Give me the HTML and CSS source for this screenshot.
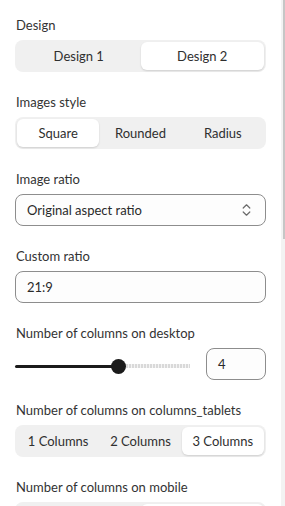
FILE: index.html
```html
<!DOCTYPE html>
<html lang="en">
<head>
    <meta charset="UTF-8">
    <meta name="viewport" content="width=device-width, initial-scale=1.0">
    <title>Gallery settings</title>
    <link rel="stylesheet" href="styles.css">
</head>
<body>

    <div class="panel">

        <!-- Design -->
        <div class="field">
            <label class="field-label">Design</label>
            <div class="segmented two">
                <button class="segment">Design 1</button>
                <button class="segment active">Design 2</button>
            </div>
        </div>

        <!-- Images style -->
        <div class="field">
            <label class="field-label">Images style</label>
            <div class="segmented three">
                <button class="segment active">Square</button>
                <button class="segment">Rounded</button>
                <button class="segment">Radius</button>
            </div>
        </div>

        <!-- Image ratio -->
        <div class="field">
            <label class="field-label">Image ratio</label>
            <div class="select">
                <span>Original aspect ratio</span>
                <svg class="select-icon" width="9" height="14" viewBox="0 0 9 14">
                    <path d="M1.2 5 L4.5 1.8 L7.8 5" fill="none" stroke="#6b6b6b" stroke-width="1.2" stroke-linecap="round" stroke-linejoin="round"/>
                    <path d="M1.2 9 L4.5 12.2 L7.8 9" fill="none" stroke="#6b6b6b" stroke-width="1.2" stroke-linecap="round" stroke-linejoin="round"/>
                </svg>
            </div>
        </div>

        <!-- Custom ratio -->
        <div class="field">
            <label class="field-label">Custom ratio</label>
            <div class="text-input">21:9</div>
        </div>

        <!-- Columns desktop -->
        <div class="field">
            <label class="field-label">Number of columns on desktop</label>
            <div class="slider-row">
                <div class="slider">
                    <div class="slider-fill" style="width: 59%;"></div>
                    <div class="slider-thumb"></div>
                    <div class="slider-rest"></div>
                </div>
                <div class="text-input number">4</div>
            </div>
        </div>

        <!-- Columns tablets -->
        <div class="field">
            <label class="field-label">Number of columns on columns_tablets</label>
            <div class="segmented three">
                <button class="segment">1 Columns</button>
                <button class="segment">2 Columns</button>
                <button class="segment active">3 Columns</button>
            </div>
        </div>

        <!-- Columns mobile -->
        <div class="field">
            <label class="field-label">Number of columns on mobile</label>
            <div class="segmented two">
                <button class="segment">1 Columns</button>
                <button class="segment active">2 Columns</button>
            </div>
        </div>

    </div>

    <!-- scrollbar of the settings panel -->
    <div class="scrollbar">
        <div class="scrollbar-thumb"></div>
    </div>

</body>
</html>
```

FILE: styles.css
```css
body {
    margin: 0;
    background: #ffffff;
    font-family: 'Lato', 'Noto Sans', sans-serif;
    font-size: 13px;
    color: #2f2f2f;
    overflow: hidden;
    position: relative;
}
.panel {
    height: 100vh;
    box-sizing: border-box;
    overflow: hidden;
    padding: 16px 19px 0 15px;
}
.scrollbar {
    position: absolute;
    top: 0;
    right: 0;
    width: 4px;
    height: 100vh;
    background: #f3f3f3;
    display: flex;
    justify-content: flex-end;
}
.scrollbar-thumb {
    width: 2px;
    height: 239px;
    background: #c6c6c6;
}
.field {
    display: flex;
    flex-direction: column;
    gap: 6px;
    margin-bottom: 21px;
}
.field-label {
    line-height: 18px;
    color: #333333;
    padding-left: 1px;
}
.segmented {
    display: grid;
    height: 32px;
    box-sizing: border-box;
    padding: 2px;
    background: #f0f0f0;
    border-radius: 8px;
}
.segmented.two {
    grid-template-columns: 1fr 1fr;
}
.segmented.three {
    grid-template-columns: 1fr 1fr 1fr;
}
.segment {
    border: none;
    background: transparent;
    font-family: inherit;
    font-size: 13px;
    color: #2f2f2f;
    border-radius: 6px;
    padding: 0;
    cursor: pointer;
}
.segment.active {
    background: #ffffff;
    box-shadow: 0 1px 2px rgba(0, 0, 0, 0.14);
}
.select, .text-input {
    height: 32px;
    box-sizing: border-box;
    border: 1px solid #8d8d8d;
    border-radius: 8px;
    background: #fdfdfd;
    padding: 0 11px;
    display: flex;
    align-items: center;
    color: #2a2a2a;
}
.select {
    justify-content: space-between;
    padding-right: 14px;
}
.slider-row {
    display: flex;
    align-items: center;
    gap: 16px;
}
.slider {
    flex: 1;
    display: flex;
    align-items: center;
    height: 16px;
    margin-top: 4px;
}
.slider-fill {
    height: 3px;
    background: #1b1b1b;
    border-radius: 2px;
}
.slider-thumb {
    width: 15px;
    height: 15px;
    margin-left: -7px;
    border-radius: 50%;
    background: #1b1b1b;
    flex-shrink: 0;
}
.slider-rest {
    flex: 1;
    height: 4px;
    background: repeating-linear-gradient(90deg, #d9d9d9 0 2px, #f4f4f4 2px 3px);
}
.text-input.number {
    width: 60px;
}
```
